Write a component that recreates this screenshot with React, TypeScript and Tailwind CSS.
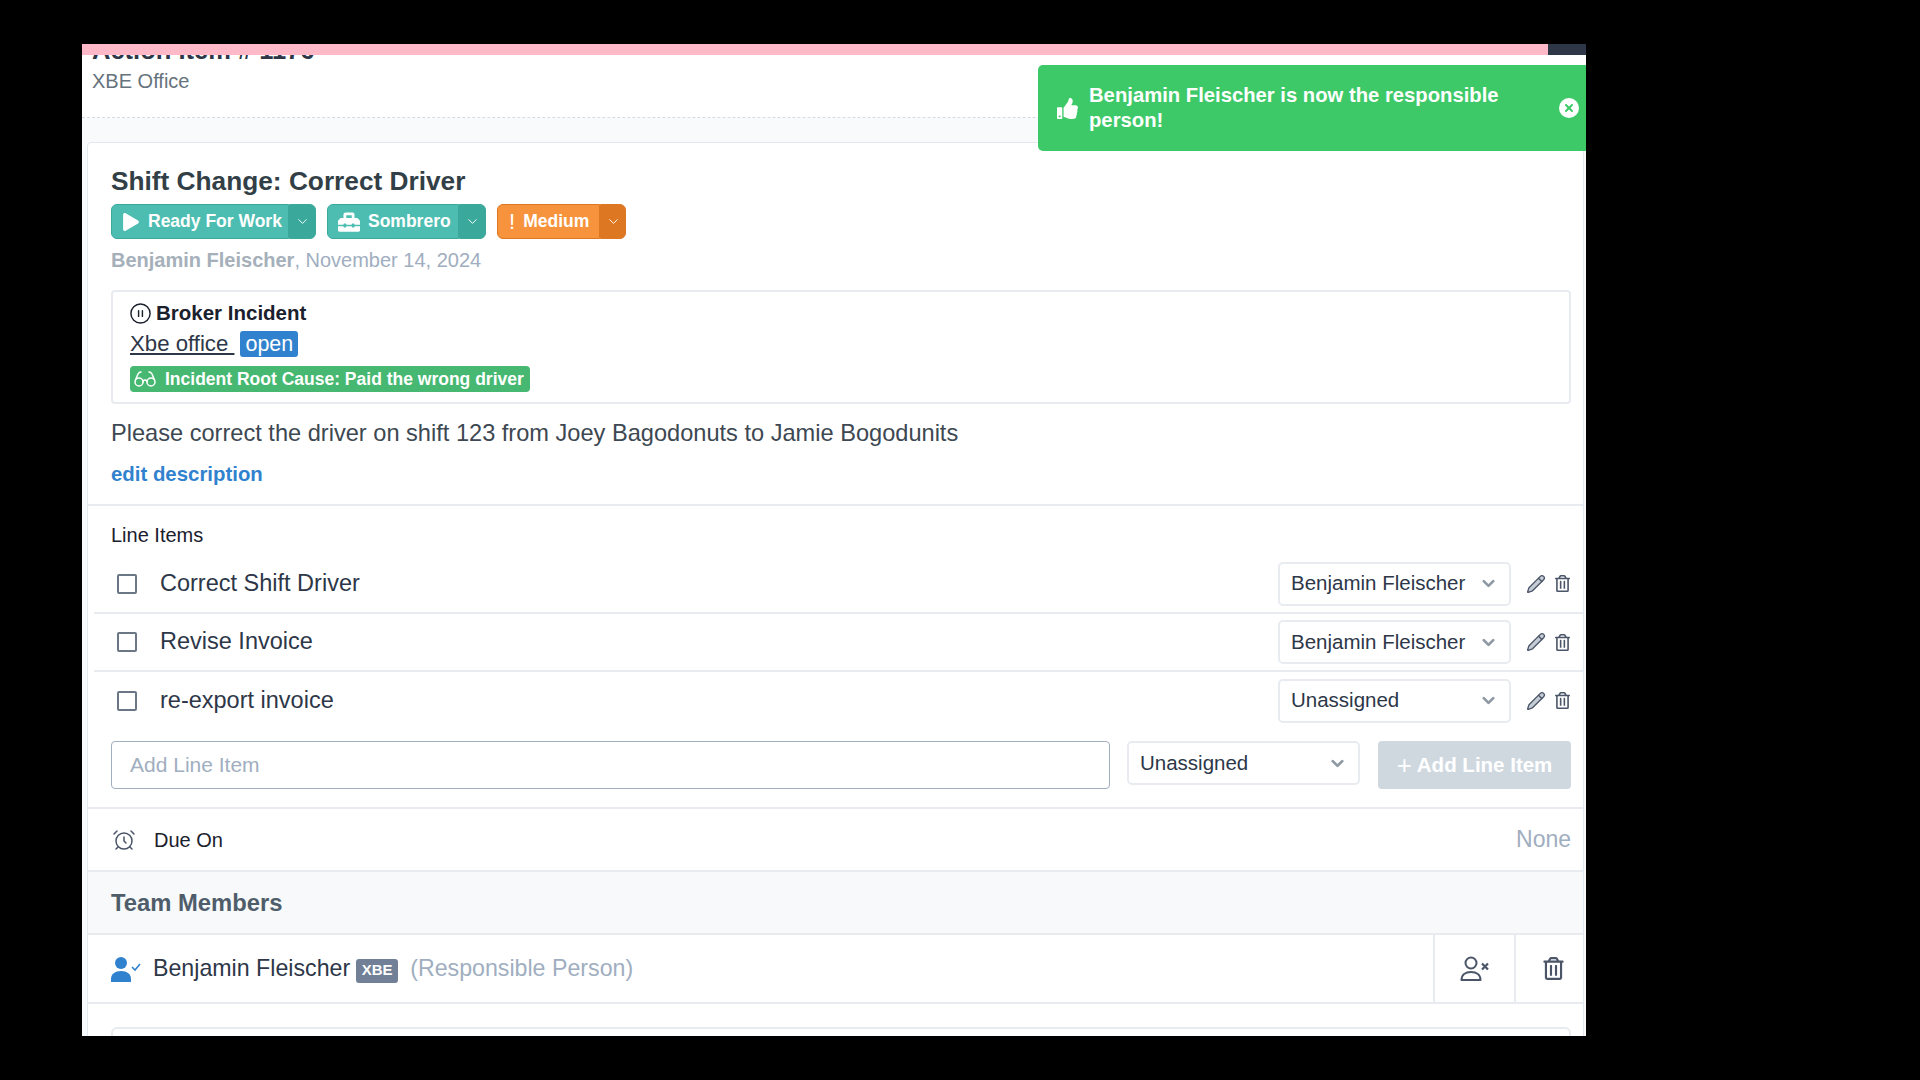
import { AlarmClock, ChevronDown, CirclePause, Glasses, Pencil, X } from "lucide-react";
import { FaPlay, FaThumbsUp, FaToolbox, FaRegTrashAlt } from "react-icons/fa";
import type { ReactNode } from "react";

const lineItems = [
  { label: "Correct Shift Driver", assignee: "Benjamin Fleischer", row: "h-[59px] border-b-2 border-[#e8ecf0]" },
  { label: "Revise Invoice", assignee: "Benjamin Fleischer", row: "h-[58px] border-b-2 border-[#e8ecf0]" },
  { label: "re-export invoice", assignee: "Unassigned", row: "h-[57px]" },
];

function StatusBadge({ icon, label, wMain, wSide, tone }: { icon: ReactNode; label: string; wMain: string; wSide: string; tone: "teal" | "orange" }) {
  const main = tone === "teal" ? "bg-[#4dbdb1] border-[#3aa99c]" : "bg-[#f6933c] border-[#dd7722]";
  const side = tone === "teal" ? "bg-[#3aa99c] border-[#3aa99c]" : "bg-[#dd7722] border-[#dd7722]";
  return (
    <div className="flex h-[35px] text-white">
      <div className={`flex items-center gap-[8px] rounded-l-[6px] border pl-[10px] font-bold text-[17.5px] ${main} ${wMain}`}>
        {icon}
        <span>{label}</span>
      </div>
      <div className={`flex items-center justify-center rounded-r-[6px] border ${side} ${wSide}`}>
        <ChevronDown size={15} strokeWidth={1.5} />
      </div>
    </div>
  );
}

function AssigneeSelect({ value, className = "" }: { value: string; className?: string }) {
  return (
    <div className={`flex w-[233px] items-center justify-between rounded-[5px] border-2 border-[#e8ecf0] bg-white pl-[11px] pr-[11px] text-[20.5px] text-[#2d3748] ${className}`}>
      <span>{value}</span>
      <ChevronDown size={19} strokeWidth={3.4} className="text-[#8f99a3]" />
    </div>
  );
}

function UserCheckSolid() {
  return (
    <svg width="30" height="26" viewBox="0 0 30 26" fill="#3182ce">
      <circle cx="10" cy="7" r="6" />
      <path d="M0 26v-3c0-5 4-8 10-8s10 3 10 8v3z" />
      <path d="M21 11l3 3 5-6" fill="none" stroke="#3182ce" strokeWidth="1.6" />
    </svg>
  );
}

function UserRemoveOutline() {
  return (
    <svg width="30" height="26" viewBox="0 0 30 26" fill="none" stroke="#4a5568" strokeWidth="2">
      <circle cx="11" cy="7" r="5.5" />
      <path d="M1.5 24c0-5 4-8 9.5-8s9.500 3 9.500 8z" strokeLinejoin="round" />
      <path d="M22 7.500l6 6m0-6l-6 6" strokeWidth="2.200" />
    </svg>
  );
}

export default function App() {
  return (
    <div className="h-screen overflow-hidden bg-black pl-[82px] pt-[44px] font-['Liberation_Sans',Arial,sans-serif]">
      <div className="relative h-[992px] w-[1504px] overflow-hidden bg-[#f8fafc]">
        {/* Loading bar */}
        <div className="relative z-10 flex h-[11px]">
          <div className="flex-1 bg-[#fdb9c7]" />
          <div className="w-[38px] bg-[#2d3748]" />
        </div>

        {/* Header */}
        <div className="flow-root h-[63px] border-b border-dashed border-[#d5dbe1] bg-white pl-[10px]">
          <div className="-mt-[21px] h-[32px] text-[25.5px] font-bold leading-[32px] text-[#2d3748]">Action Item # 1176</div>
          <div className="mt-[2px] text-[20px] leading-[26px] text-[#66727c]">XBE Office</div>
        </div>

        {/* Toast */}
        <div className="absolute left-[956px] top-[21px] z-20 flex h-[86px] w-[548px] items-center rounded-l-[5px] bg-[#3dc968] pl-[19px] pr-[7px] text-white">
          <FaThumbsUp size={21} className="shrink-0" />
          <div className="ml-[11px] flex-1 pr-[50px] text-[20.25px] font-bold leading-[25px]">Benjamin Fleischer is now the responsible person!</div>
          <div className="flex h-[20px] w-[20px] shrink-0 items-center justify-center rounded-full bg-white text-[#3dc968]">
            <X size={12} strokeWidth={4} />
          </div>
        </div>

        {/* Card */}
        <div className="ml-[5px] mr-[2px] mt-[24px] rounded-[4px] border border-[#e2e8f0] bg-white">
          <div className="border-b-2 border-[#e8ecf0] pb-[17px] pl-[23px] pr-[12px] pt-[21px]">
            <h1 className="text-[26.25px] font-bold leading-[34px] text-[#333f47]">Shift Change: Correct Driver</h1>
            <div className="mt-[6px] flex gap-[11px]">
              <StatusBadge tone="teal" label="Ready For Work" wMain="w-[178px]" wSide="w-[27px]" icon={<FaPlay size={18} />} />
              <StatusBadge tone="teal" label="Sombrero" wMain="w-[132px]" wSide="w-[27px]" icon={<FaToolbox size={22} />} />
              <StatusBadge tone="orange" label="Medium" wMain="w-[103px]" wSide="w-[26px]" icon={<span className="ml-[1px] text-[22px] font-normal leading-none">!</span>} />
            </div>
            <div className="mt-[8px] text-[20px] leading-[26px] text-[#a0aec0]">
              <span className="font-bold text-[#a5b0ba]">Benjamin Fleischer</span>, November 14, 2024
            </div>

            <div className="mt-[17px] h-[114px] rounded-[4px] border-2 border-[#e8ecf0] pl-[17px] pt-[8px]">
              <div className="flex h-[26px] items-center gap-[4px] text-[20.5px] font-bold text-[#1a202c]">
                <CirclePause size={23} strokeWidth={1.5} className="-ml-[1px]" />
                <span>Broker Incident</span>
              </div>
              <div className="mt-[3px] flex h-[30px] items-center text-[22.2px] text-[#2d3748]">
                <span className="whitespace-pre underline">Xbe office </span>
                <span className="ml-[6px] rounded-[3px] bg-[#3182ce] px-[5px] text-[21.5px] leading-[26px] text-white">open</span>
              </div>
              <div className="mt-[7px] flex h-[26px] w-[400px] items-center gap-[8px] rounded-[4px] bg-[#46b871] pl-[3px] text-[17.5px] font-bold text-white">
                <Glasses size={24} strokeWidth={1.5} />
                <span>Incident Root Cause: Paid the wrong driver</span>
              </div>
            </div>

            <p className="mt-[14px] text-[23.6px] leading-[30px] text-[#3d4852]">Please correct the driver on shift 123 from Joey Bagodonuts to Jamie Bogodunits</p>
            <div className="mt-[13px] text-[20.4px] font-bold leading-[26px] text-[#3182ce]">edit description</div>
          </div>

          {/* Line items */}
          <div className="border-b-2 border-[#e8ecf0] pb-[18px] pt-[16px]">
            <div className="pl-[23px] text-[20px] leading-[26px] text-[#1a202c]">Line Items</div>
            <div className="ml-[6px] mt-[7px]">
              {lineItems.map((item) => (
                <div key={item.label} className={`flex items-center pr-[12px] ${item.row}`}>
                  <div className="ml-[23px] h-[20px] w-[20px] rounded-[2px] border-2 border-[#6b7785]" />
                  <span className="ml-[23px] flex-1 text-[23.5px] text-[#2d3748]">{item.label}</span>
                  <AssigneeSelect value={item.assignee} className="h-[44px]" />
                  <Pencil size={20} strokeWidth={1.6} className="ml-[15px] fill-[#c5ccd4] text-[#4a5568]" />
                  <FaRegTrashAlt size={17} className="ml-[8px] text-[#4a5568]" />
                </div>
              ))}
            </div>
            <div className="mt-[12px] flex pl-[23px] pr-[12px]">
              <div className="flex h-[48px] w-[999px] items-center rounded-[4px] border border-[#a0aec0] pl-[18px] text-[21px] text-[#a0aec0]">Add Line Item</div>
              <AssigneeSelect value="Unassigned" className="ml-[17px] h-[44px]" />
              <div className="ml-[18px] flex h-[48px] flex-1 items-center justify-center gap-[5px] rounded-[4px] bg-[#cfd8df] text-[20.5px] font-bold text-white">
                <span className="text-[26px] font-normal leading-none">+</span>
                <span>Add Line Item</span>
              </div>
            </div>
          </div>

          {/* Due on */}
          <div className="flex h-[63px] items-center border-b-2 border-[#e8ecf0] pl-[24px] pr-[12px]">
            <AlarmClock size={24} strokeWidth={1.5} className="text-[#4a5568]" />
            <span className="ml-[18px] flex-1 text-[20px] text-[#1a202c]">Due On</span>
            <span className="text-[23px] text-[#a0aec0]">None</span>
          </div>

          {/* Team members */}
          <div className="flex h-[63px] items-center border-b-2 border-[#e8ecf0] bg-[#f7f9fa] pl-[23px] text-[23.8px] font-bold text-[#4f5d6b]">Team Members</div>
          <div className="flex h-[69px] border-b-2 border-[#e8ecf0]">
            <div className="flex flex-1 items-center pl-[23px]">
              <UserCheckSolid />
              <span className="ml-[12px] text-[23.2px] text-[#2d3748]">Benjamin Fleischer</span>
              <span className="ml-[6px] mt-[4px] flex h-[24px] w-[42px] items-center justify-center rounded-[3px] bg-[#718096] text-[15px] font-bold text-white">XBE</span>
              <span className="ml-[12px] text-[23.2px] text-[#a0aec0]">(Responsible Person)</span>
            </div>
            <div className="flex w-[81px] items-center justify-center border-l-2 border-[#e8ecf0]">
              <UserRemoveOutline />
            </div>
            <div className="flex w-[69px] items-center justify-center border-l-2 border-[#e8ecf0] pl-[8px]">
              <FaRegTrashAlt size={23} className="text-[#4a5568]" />
            </div>
          </div>
          <div className="ml-[23px] mr-[12px] mt-[23px] h-[80px] rounded-[6px] border-2 border-[#e8ecf0]" />
        </div>
      </div>
    </div>
  );
}
